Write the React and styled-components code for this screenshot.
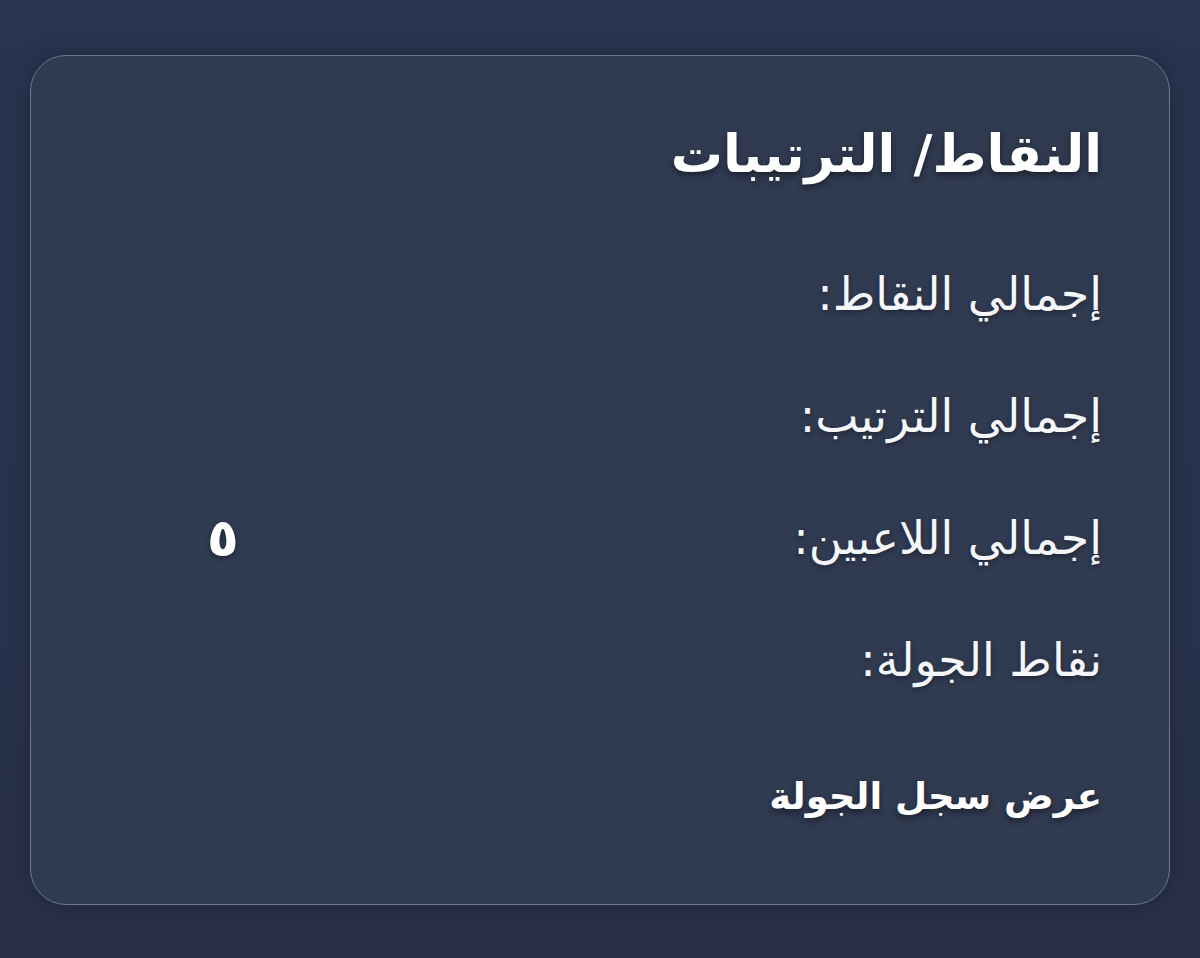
import React from "react"
import styled, { createGlobalStyle } from "styled-components"

const GlobalStyle = createGlobalStyle`
  html, body {
    margin: 0;
    padding: 0;
    background: #28324b;
  }
  body {
    font-family: "DejaVu Sans", "Noto Sans", sans-serif;
  }
`

const Page = styled.div`
  min-height: 958px;
  box-sizing: border-box;
  padding: 55px 30px 53px;
  background: linear-gradient(180deg, #29344f 0%, #283049 100%);
  display: flex;
`

const Card = styled.section`
  flex: 1;
  direction: rtl;
  box-sizing: border-box;
  padding: 68px 67px 0 0;
  border: 1.5px solid #6d7891;
  border-radius: 36px;
  background: #303a50;
  box-shadow: 0 0 18px rgba(10, 16, 30, 0.35);
  display: flex;
  flex-direction: column;
`

const Title = styled.h2`
  margin: 0 0 82px;
  font-size: 52px;
  line-height: 60px;
  font-weight: 700;
  color: #ffffff;
  text-shadow: 0 3px 6px rgba(0, 0, 0, 0.45);
`

const List = styled.div`
  display: flex;
  flex-direction: column;
  gap: 66px;
`

const Row = styled.div`
  display: flex;
  align-items: center;
  justify-content: space-between;
  height: 56px;
`

const Label = styled.span`
  font-size: 46px;
  line-height: 56px;
  color: #f4f6fa;
  text-shadow: 0 2px 5px rgba(0, 0, 0, 0.35);
`

const Value = styled.span`
  margin-left: 176px;
  font-size: 52px;
  line-height: 56px;
  font-weight: 700;
  color: #ffffff;
  text-shadow: 0 2px 5px rgba(0, 0, 0, 0.4);
`

const HistoryLink = styled.a`
  margin-top: 87px;
  font-size: 37px;
  line-height: 44px;
  font-weight: 700;
  color: #ffffff;
  text-decoration: none;
  text-shadow: 0 3px 6px rgba(0, 0, 0, 0.45);
  cursor: pointer;
`

const stats = [
  { label: "إجمالي النقاط:", value: "" },
  { label: "إجمالي الترتيب:", value: "" },
  { label: "إجمالي اللاعبين:", value: "٥" },
  { label: "نقاط الجولة:", value: "" },
]

const App = () => (
  <>
    <GlobalStyle />
    <Page>
      <Card>
        <Title>النقاط/ الترتيبات</Title>
        <List>
          {stats.map((s, i) => (
            <Row key={`stat-${i}`}>
              <Label>{s.label}</Label>
              {s.value && <Value>{s.value}</Value>}
            </Row>
          ))}
        </List>
        <HistoryLink>عرض سجل الجولة</HistoryLink>
      </Card>
    </Page>
  </>
)

export default App
